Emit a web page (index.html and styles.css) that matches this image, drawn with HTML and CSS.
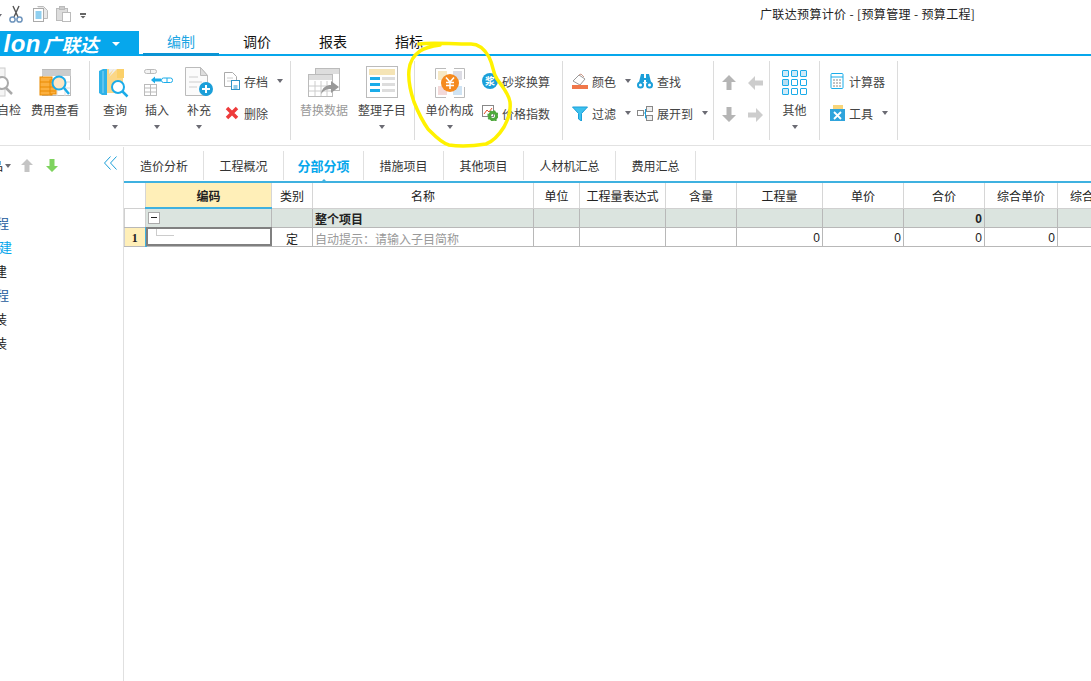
FILE: index.html
```html
<!DOCTYPE html>
<html lang="zh-CN">
<head>
<meta charset="utf-8">
<title>广联达预算计价</title>
<link rel="stylesheet" href="styles.css">
</head>
<body>
<div class="app">
  <header class="quick">
    <i class="caret q-first"></i>
    <svg class="q-ic scissors" width="14" height="18" viewBox="0 0 14 18"><path d="M4 1l5 11M10 1L5 12" stroke="#555" stroke-width="1.4" fill="none"/><circle cx="3.5" cy="14.5" r="2.6" fill="none" stroke="#6f95bd" stroke-width="1.5"/><circle cx="10.5" cy="14.5" r="2.6" fill="none" stroke="#6f95bd" stroke-width="1.5"/></svg>
    <svg class="q-ic copy" width="16" height="16" viewBox="0 0 16 16"><path d="M4.500 .5h6l4 4v8h-4" fill="#e8e8e8" stroke="#bbb"/><rect x=".5" y="2.500" width="10" height="13" fill="#fff" stroke="#aaa"/><path d="M2.500 6h6M2.500 8h6M2.500 10h6M2.500 12h6" stroke="#1f9fe0"/></svg>
    <svg class="q-ic paste" width="16" height="16" viewBox="0 0 16 16"><rect x=".5" y="2.500" width="11" height="12" fill="#ddd" stroke="#bbb"/><rect x="3.500" y=".5" width="5" height="3" fill="#ccc" stroke="#bbb"/><rect x="6.500" y="6.500" width="8" height="9" fill="#fff" stroke="#bbb"/></svg>
    <span class="q-more"></span>
    <h1 class="win-title">广联达预算计价 - [预算管理 - 预算工程]</h1>
  </header>

  <nav class="menu">
    <div class="logo"><b class="logo-en">lon</b><b class="logo-cn">广联达</b><i class="caret white"></i></div>
    <a class="menu-tab on">编制</a>
    <a class="menu-tab">调价</a>
    <a class="menu-tab">报表</a>
    <a class="menu-tab">指标</a>
  </nav>

  <section class="ribbon">
    <div class="grp g1">
      <div class="big w-check">
        <svg class="ic" width="32" height="32" viewBox="0 0 32 32"><rect x="-8" y="2" width="20" height="28" fill="#f5f5f5" stroke="#ccc"/><circle cx="9" cy="17" r="6" fill="#fff" stroke="#aaa" stroke-width="2"/><path d="M13 22l6 6" stroke="#aaa" stroke-width="2.500"/></svg>
        <span>自检</span>
      </div>
      <div class="big w-fee">
        <svg class="ic" width="32" height="32" viewBox="0 0 32 32"><rect x="3.500" y="3.500" width="28" height="26" fill="#fff" stroke="#bbb"/><path d="M3 7h29" stroke="#ccc" stroke-width="6"/><path d="M10 12v18M18 12v18M26 12v18M4 16h27M4 22h27" stroke="#ddd"/><rect x="1" y="11" width="12" height="18" fill="#fbb040" stroke="#e98a00"/><rect x="11" y="14" width="6" height="14" fill="#fbb040" stroke="#e98a00"/><path d="M1 16h15M1 21h15M1 25h15" stroke="#e98a00"/><circle cx="20" cy="17" r="6.500" fill="#fde6c3" stroke="#1bace9" stroke-width="2"/><path d="M25 22l5 6" stroke="#1bace9" stroke-width="2.500"/></svg>
        <span>费用查看</span>
      </div>
    </div>

    <div class="grp g2">
      <div class="big w-query">
        <svg class="ic" width="32" height="32" viewBox="0 0 32 32"><path d="M0 5l4-2h4v26H3l-3-2z" fill="#2fb2e8"/><path d="M8 3l12 0 4 0v24H8z" fill="#fbd787"/><path d="M10 3l5 0-5 5zM15 3h3l-8 8" fill="#eee"/><path d="M4 5v22" stroke="#8fd6f4"/><path d="M18 3h7v9h-7z" fill="#fbd069"/><circle cx="19" cy="21" r="6" fill="#fff" stroke="#1bace9" stroke-width="2"/><path d="M23.500 25.500l5 5" stroke="#1bace9" stroke-width="2.500"/></svg>
        <span>查询</span><i class="caret"></i>
      </div>
      <div class="big w-insert">
        <svg class="ic" width="32" height="32" viewBox="0 0 32 32"><rect x="3.500" y="3.500" width="12" height="4" rx="2" fill="#f3f3f3" stroke="#bbb"/><path d="M9.500 3.500v4" stroke="#bbb"/><path d="M14 14h6" stroke="#1bace9" stroke-width="3"/><path d="M14 10.500v7l-4-3.500z" fill="#1bace9"/><rect x="20.500" y="12" width="11" height="4.500" rx="2" fill="#fff" stroke="#1bace9"/><path d="M26 12v4.500" stroke="#1bace9"/><rect x="3.500" y="18.500" width="12" height="11" fill="#fff" stroke="#bbb"/><path d="M3.500 22h12M3.500 26h12M9.500 18.500v11" stroke="#bbb"/></svg>
        <span>插入</span><i class="caret"></i>
      </div>
      <div class="big w-add">
        <svg class="ic" width="32" height="32" viewBox="0 0 32 32"><path d="M2.500 1.500h15l7 8v20h-22z" fill="#fbfbfb" stroke="#bbb"/><path d="M17.500 1.500v8h7z" fill="#ddd" stroke="#bbb"/><path d="M6 11h9M6 16h13M6 21h8" stroke="#ddd" stroke-width="1.500"/><circle cx="23" cy="23" r="7" fill="#1b9fd9"/><path d="M23 19v8M19 23h8" stroke="#fff" stroke-width="2"/></svg>
        <span>补充</span><i class="caret"></i>
      </div>
      <div class="small-col c-archive">
        <div class="small">
          <svg class="sic" width="16" height="18" viewBox="0 0 16 18"><path d="M.5.5h8l4 4v10H.5z" fill="#fff" stroke="#aaa"/><path d="M3 6h6M3 9h6" stroke="#ccc"/><rect x="7.500" y="8.500" width="8" height="9" fill="#fff" stroke="#2e93c7"/><rect x="9.500" y="13" width="4" height="4" fill="#8fcbe9"/></svg>
          <span>存档</span><i class="caret"></i>
        </div>
        <div class="small">
          <svg class="sic" width="16" height="14" viewBox="0 0 16 14"><path d="M3 2l10 10M13 2L3 12" stroke="#ee3b3b" stroke-width="3.500"/></svg>
          <span>删除</span>
        </div>
      </div>
    </div>

    <div class="grp g3">
      <div class="big w-replace dim">
        <svg class="ic" width="32" height="32" viewBox="0 0 32 32"><rect x="7.500" y="2.500" width="24" height="22" fill="#fff" stroke="#bbb"/><path d="M8 5.500h23" stroke="#ddd" stroke-width="5"/><rect x=".5" y="8.500" width="24" height="22" fill="#fff" stroke="#bbb"/><path d="M1 11.500h23" stroke="#ddd" stroke-width="5"/><path d="M1 20h23M1 25h23M7 15v15M13 15v15M19 15v15" stroke="#ccc"/><path d="M13 28c1-7 6-9 10-9v-4l8 6-8 6v-4c-4 0-7 1-10 5z" fill="#999"/></svg>
        <span>替换数据</span>
      </div>
      <div class="big w-tidy">
        <svg class="ic" width="32" height="32" viewBox="0 0 32 32"><rect x=".5" y=".5" width="31" height="31" fill="#fff" stroke="#bbb"/><rect x="3" y="3" width="26" height="6" fill="#f5e4b5"/><rect x="3" y="11" width="11" height="18" fill="#fff"/><path d="M4 12.500h10M4 18.500h10M4 24.500h10" stroke="#1bace9" stroke-width="3"/><path d="M16 12.500h13M16 18.500h13M16 24.500h13" stroke="#ddd" stroke-width="3"/></svg>
        <span>整理子目</span><i class="caret"></i>
      </div>
    </div>

    <div class="grp g4">
      <div class="big w-price">
        <svg class="ic price-ic" width="30" height="30" viewBox="0 0 30 30"><path d="M.5 11V.5H11M19 .5h10.500V11M29.500 19v10.500H19M11 29.500H.5V19" fill="none" stroke="#bbb"/><rect x="3" y="3" width="9" height="9" fill="#f6e8c3"/><rect x="18" y="3" width="9" height="9" fill="#dcdce4"/><rect x="3" y="18" width="9" height="9" fill="#f3d9d9"/><rect x="18" y="18" width="9" height="9" fill="#cfe3f3"/><circle cx="15" cy="15" r="9" fill="#f58a1f"/><path d="M11 9.500l4 4.500 4-4.500M15 14v7M11 14.500h8M11 17.500h8" fill="none" stroke="#fff" stroke-width="1.500"/></svg>
        <span>单价构成</span><i class="caret"></i>
      </div>
      <div class="small-col c-mortar">
        <div class="small">
          <svg class="sic" width="16" height="16" viewBox="0 0 16 16"><circle cx="8" cy="8" r="8" fill="#1b9fd9"/><text x="8" y="12" class="badge">浆</text></svg>
          <span>砂浆换算</span>
        </div>
        <div class="small">
          <svg class="sic" width="16" height="16" viewBox="0 0 16 16"><rect x=".5" y=".5" width="11" height="11" fill="#fff" stroke="#888"/><path d="M2 9l3-4 2 2 3-4" fill="none" stroke="#e2502c"/><circle cx="11" cy="11" r="3.500" fill="none" stroke="#4ea83c" stroke-width="3"/><circle cx="11" cy="11" r="5" fill="none" stroke="#4ea83c" stroke-width="1.500" stroke-dasharray="2 1.900"/></svg>
          <span>价格指数</span>
        </div>
      </div>
    </div>

    <div class="grp g5">
      <div class="small-col c-color">
        <div class="small">
          <svg class="sic" width="16" height="16" viewBox="0 0 16 16"><path d="M1 8l6-6 6 4-5 6z" fill="#fff" stroke="#999"/><path d="M7 2l2-1 3 3" fill="none" stroke="#c98"/><rect x="0" y="12" width="16" height="4" fill="#f0774a"/></svg>
          <span>颜色</span><i class="caret"></i>
        </div>
        <div class="small">
          <svg class="sic" width="16" height="15" viewBox="0 0 16 15"><path d="M.5 1h15l-6 6.500V15l-3-2V7.500z" fill="#3cc1ee" stroke="#1b9fd9"/></svg>
          <span>过滤</span><i class="caret"></i>
        </div>
      </div>
      <div class="small-col c-find">
        <div class="small">
          <svg class="sic" width="16" height="15" viewBox="0 0 16 15"><path d="M4 0h3v4h2V0h3l2 8h-5V6H7v2H2z" fill="#1b9fd9"/><circle cx="3.500" cy="11" r="3.500" fill="#1b9fd9"/><circle cx="12.500" cy="11" r="3.500" fill="#1b9fd9"/><circle cx="3.500" cy="11" r="1.500" fill="#fff"/><circle cx="12.500" cy="11" r="1.500" fill="#fff"/></svg>
          <span>查找</span>
        </div>
        <div class="small">
          <svg class="sic" width="16" height="15" viewBox="0 0 16 15"><rect x=".5" y="4.500" width="6" height="5" fill="#fff" stroke="#888"/><rect x="9.500" y=".5" width="6" height="5" fill="#eee" stroke="#888"/><rect x="9.500" y="9.500" width="6" height="5" fill="#eee" stroke="#888"/><path d="M7 7h1.500M8.500 3v9h1" fill="none" stroke="#1b9fd9"/></svg>
          <span>展开到</span><i class="caret"></i>
        </div>
      </div>
    </div>

    <div class="grp g6">
      <svg class="arrow" width="14" height="15" viewBox="0 0 14 15"><path d="M7 0l7 7H9.500v8h-5V7H0z" fill="#b5b5b5"/></svg>
      <svg class="arrow" width="15" height="14" viewBox="0 0 15 14"><path d="M0 7l7-7v4.500h8v5H7V14z" fill="#cdcdcd"/></svg>
      <svg class="arrow" width="14" height="15" viewBox="0 0 14 15"><path d="M7 15L0 8h4.500V0h5v8H14z" fill="#b5b5b5"/></svg>
      <svg class="arrow" width="15" height="14" viewBox="0 0 15 14"><path d="M15 7L8 0v4.500H0v5h8V14z" fill="#cdcdcd"/></svg>
    </div>

    <div class="grp g7">
      <div class="big w-other">
        <div class="dots"><i class="f"></i><i class="f"></i><i class="f"></i><i class="s"></i><i></i><i></i><i class="f"></i><i></i><i></i></div>
        <span>其他</span><i class="caret"></i>
      </div>
    </div>

    <div class="grp g8">
      <div class="small-col c-tools">
        <div class="small">
          <svg class="sic" width="15" height="16" viewBox="0 0 15 16"><rect x="1" y=".5" width="12" height="15" rx="1" fill="#fff" stroke="#1bace9"/><path d="M1 4h12" stroke="#1bace9"/><path d="M3 7h2M6 7h2M9 7h2M3 10h2M6 10h2M9 10h2M3 13h2M6 13h2M9 13h2" stroke="#888"/></svg>
          <span>计算器</span>
        </div>
        <div class="small">
          <svg class="sic" width="15" height="16" viewBox="0 0 15 16"><rect x="3" y="0" width="10" height="7" fill="#f7d57a"/><rect x="0" y="4" width="15" height="12" fill="#2fa4dc"/><path d="M4 7l7 7M11 7l-7 7" stroke="#fff" stroke-width="1.800"/></svg>
          <span>工具</span><i class="caret"></i>
        </div>
      </div>
    </div>
  </section>

  <main class="main">
    <aside class="side">
      <div class="side-bar">
        <span class="side-clip">品</span><i class="caret"></i>
        <svg class="side-up" width="12" height="13" viewBox="0 0 12 13"><path d="M6 0l6 6H8.500v7h-5V6H0z" fill="#c4c4c4"/></svg>
        <svg class="side-down" width="12" height="13" viewBox="0 0 12 13"><path d="M6 13L0 7h3.500V0h5v7H12z" fill="#7ed35e"/></svg>
        <svg class="side-fold" width="13" height="14" viewBox="0 0 13 14"><path d="M6.500.5L.5 7l6 6.500M12.500.5l-6 6.500 6 6.500" fill="none" stroke="#1b9fd9"/></svg>
      </div>
      <ul class="tree">
        <li class="node-a">程</li>
        <li class="node-b">建</li>
        <li>建</li>
        <li class="node-a">程</li>
        <li>装</li>
        <li>装</li>
      </ul>
    </aside>

    <div class="content">
      <div class="subtabs">
        <a class="sub s78">造价分析</a>
        <a class="sub s80">工程概况</a>
        <a class="sub s80 on">分部分项</a>
        <a class="sub s80">措施项目</a>
        <a class="sub s80">其他项目</a>
        <a class="sub s92">人材机汇总</a>
        <a class="sub s80">费用汇总</a>
      </div>
      <div class="grid-wrap">
        <table class="grid">
          <colgroup>
            <col class="c0"><col class="c1"><col class="c2"><col class="c3"><col class="c4"><col class="c5"><col class="c6"><col class="c7"><col class="c8"><col class="c9"><col class="c10"><col class="c11">
          </colgroup>
          <thead>
            <tr>
              <th></th><th class="sel">编码</th><th>类别</th><th>名称</th><th>单位</th><th>工程量表达式</th><th>含量</th><th>工程量</th><th>单价</th><th>合价</th><th>综合单价</th><th>综合合价</th>
            </tr>
          </thead>
          <tbody>
            <tr class="total">
              <td class="rh"></td><td class="code"><span class="minus"></span></td><td></td><td class="left strong">整个项目</td><td></td><td></td><td></td><td></td><td></td><td class="num strong">0</td><td></td><td></td>
            </tr>
            <tr class="row">
              <td class="rh cur">1</td><td class="active"><span class="tree-line"></span></td><td class="mid">定</td><td class="left hint">自动提示：请输入子目简称</td><td></td><td></td><td></td><td class="num">0</td><td class="num">0</td><td class="num">0</td><td class="num">0</td><td></td>
            </tr>
          </tbody>
        </table>
      </div>
    </div>
  </main>

  <svg class="ink" width="1091" height="681" viewBox="0 0 1091 681"><path d="M419 44c12-2 30 0 52 0 8 0 14 6 18 13 5 10 3 14 8 22 5 7 12 15 13 23 1 11-2 17-6 25-5 8-10 14-18 17-12 2-25 3-37 1-8-2-15-10-21-16-5-7-10-17-14-27-3-9-6-22-5-32 1-9 4-14 11-19 6-4 13-5 20-6" fill="none" stroke="#fff200" stroke-width="3.500" stroke-linecap="round"/></svg>
</div>
</body>
</html>
```
FILE: styles.css
```css
* { box-sizing: border-box; }
html, body { margin: 0; padding: 0; height: 100%; overflow: hidden; background: #fff; }
body { font-family: "Noto Sans CJK SC", "Liberation Sans", sans-serif; font-size: 12px; color: #333; }
.app { position: relative; width: 1091px; height: 681px; overflow: hidden; display: flex; flex-direction: column; }

.caret { display: block; width: 0; height: 0; border-left: 3.500px solid transparent; border-right: 3.500px solid transparent; border-top: 4px solid #6b6b73; }
.caret.white { border-top-color: #fff; border-left-width: 4px; border-right-width: 4px; border-top-width: 4px; }

/* quick access */
.quick { height: 31px; flex: none; display: flex; align-items: center; }
.q-first { margin-left: -4px; }
.q-ic { flex: none; display: block; }
.scissors { margin-left: 7px; margin-top: -3px; }
.copy { margin-left: 10px; margin-top: -4px; }
.paste { margin-left: 7px; margin-top: -4px; }
.q-more { margin-left: 8px; width: 6px; height: 6px; background: linear-gradient(#666 0 2px, transparent 2px 3px, #666 3px); clip-path: polygon(0 0, 100% 0, 100% 50%, 50% 100%, 0 50%); }
.win-title { margin: -3px 0 0 674px; font-size: 12px; font-weight: 400; color: #222; white-space: nowrap; line-height: 16px; letter-spacing: .35px; }

/* menu tabs */
.menu { height: 25px; flex: none; display: flex; border-bottom: 2px solid #06a7ec; }
.logo { width: 139px; flex: none; margin-bottom: -2px; background: #06a7ec; color: #fff; display: flex; align-items: center; position: relative; white-space: nowrap; overflow: hidden; }
.logo-en { font-family: "Liberation Sans", sans-serif; font-style: italic; font-weight: 700; font-size: 24px; width: 41px; flex: none; text-align: right; line-height: 24px; letter-spacing: .5px; overflow: hidden; direction: rtl; }
.logo-cn { font-size: 18.500px; font-style: italic; font-weight: 700; margin-left: 2px; line-height: 24px; }
.logo .caret { margin-left: 13px; }
.menu-tab { width: 76px; flex: none; text-align: center; font-size: 14px; line-height: 21px; color: #111; }
.menu-tab:first-of-type { margin-left: 4px; }
.menu-tab.on { color: #1ba5e3; border-bottom: 3px solid #0a94d4; height: 25px; margin-bottom: -2px; }

/* ribbon */
.ribbon { height: 90px; flex: none; display: flex; border-bottom: 1px solid #e2e2e2; padding-top: 5px; padding-bottom: 5px; }
.grp { flex: none; display: flex; border-right: 1px solid #dcdcdc; position: relative; }
.g1 { width: 90px; }
.g2 { width: 201px; padding-left: 4px; }
.g3 { width: 124px; padding-left: 4px; }
.g4 { width: 148px; padding-left: 10px; }
.g5 { width: 151px; padding-left: 9px; }
.g6 { width: 56px; display: grid; grid-template-columns: 26px 26px; justify-items: center; align-items: center; padding: 14px 0 18px 2px; row-gap: 0; align-content: space-between; }
.g7 { width: 50px; justify-content: center; }
.g8 { width: 78px; padding-left: 10px; }

.big { display: flex; flex-direction: column; align-items: center; padding-top: 4px; flex: none; color: #444; }
.big > span { line-height: 16px; margin-top: 3px; white-space: nowrap; }
.big .ic { display: block; flex: none; height: 34px; }
.big .price-ic { width: 30px; height: 30px; margin: 3px 0 1px 1px; }
.big .caret { margin-top: 7px; }
.w-check { width: 46px; margin-left: -14px; }
.w-fee { width: 64px; margin-left: -9px; }
.w-query { width: 42px; }
.w-insert { width: 42px; }
.w-add { width: 42px; }
.w-replace { width: 58px; }
.w-replace .ic, .w-fee .ic { width: 32px; }
.w-tidy { width: 58px; }
.w-price { width: 49px; }
.dim { color: #999; }
.badge { font: 700 10px "Noto Sans CJK SC", sans-serif; fill: #fff; text-anchor: middle; }

.small-col { display: flex; flex-direction: column; justify-content: space-between; padding: 11px 0 18px; flex: none; color: #444; }
.small { display: flex; align-items: center; height: 18px; position: relative; white-space: nowrap; }
.small .sic { flex: none; display: block; margin-right: 4px; }
.small .caret { margin-left: 9px; }
.c-archive { margin-left: 4px; }
.c-mortar { margin-left: 8px; }
.c-find { margin-left: 6px; }

.arrow { display: block; }

.dots { display: grid; grid-template-columns: repeat(3, 7px); grid-auto-rows: 7px; gap: 2px; margin: 5px 0 4px; }
.dots i { display: block; border: 1px solid #1bace9; background: #fff; border-radius: 1px; }
.dots i.f { background: #cfeaf8; }
.dots i.s { background: #b7dff3; }

/* main */
.main { flex: 1; display: flex; min-height: 0; }
.side { width: 124px; flex: none; border-right: 1px solid #e0e0e0; margin-top: 1px; position: relative; overflow: hidden; }
.side-bar { height: 36px; display: flex; align-items: center; padding-top: 1px; }
.side-clip { width: 3px; overflow: hidden; direction: rtl; color: #222; flex: none; }
.side-bar .caret { margin-left: 2px; }
.side-up { margin-left: 10px; }
.side-down { margin-left: 13px; }
.side-fold { margin-left: 46px; margin-top: -6px; }
.tree { list-style: none; margin: 28px 0 0; padding: 0; }
.tree li { height: 24px; line-height: 24px; font-size: 13px; margin-left: -6px; color: #222; }
.tree .node-a { color: #1c5a9c; margin-left: -4px; }
.tree .node-b { color: #06a7ec; margin-left: -1px; }

.content { flex: 1; min-width: 0; display: flex; flex-direction: column; padding-top: 3px; }
.subtabs { height: 34px; flex: none; display: flex; border-bottom: 2px solid #3fb1e0; padding-left: 1px; }
.sub { flex: none; text-align: center; height: 29px; margin-top: 2px; border-right: 1px solid #e0e0e0; color: #333; position: relative; line-height: 30px; }
.s78 { width: 79px; }
.s80 { width: 80px; }
.s92 { width: 92px; }
.sub.on { color: #06a7ec; font-weight: 700; font-size: 13px; }
.sub.on::after { content: ""; position: absolute; left: 50%; bottom: -3px; margin-left: -4px; border-left: 4px solid transparent; border-right: 4px solid transparent; border-bottom: 4px solid #3fb1e0; }

.grid-wrap { flex: 1; overflow: hidden; }
.grid { border-collapse: collapse; table-layout: fixed; width: 1006px; color: #222; }
.c0 { width: 21px; } .c1 { width: 126px; } .c2 { width: 41px; } .c3 { width: 221px; } .c4 { width: 46px; } .c5 { width: 86px; } .c6 { width: 71px; } .c7 { width: 86px; } .c8 { width: 81px; } .c9 { width: 81px; } .c10 { width: 73px; } .c11 { width: 73px; }
.grid th, .grid td { padding: 0 2px; overflow: hidden; white-space: nowrap; }
.grid th { height: 25px; font-weight: 400; text-align: center; border-right: 1px solid #d6d6d6; border-bottom: 1px solid #d0d0d0; background: #fff; }
.grid th.sel { background: #ffefb8; font-weight: 700; border-bottom: 2px solid #3fb1e0; }
.grid td { height: 19px; line-height: 16px; padding-top: 2px; border-right: 1px solid #b8b8b8; border-bottom: 1px solid #b8b8b8; font-size: 12px; position: relative; }
.grid .row td { line-height: 15px; padding-top: 3px; }
.total td { background: #dbe4df; }
.total td.rh { background: #fff; border-left: 1px solid #d0d0d0; border-right-color: #d0d0d0; }
.rh { text-align: center; font: 700 12px "Liberation Serif", serif; border-left: 1px solid #d0d0d0; }
.rh.cur { background: #ffefb8; border-right: 2px solid #3fb1e0; }
.left { text-align: left; }
.mid { text-align: center; }
.num { text-align: right; font-family: "Liberation Sans", sans-serif; }
.strong { font-weight: 700; }
.hint { color: #999; }
.grid td.code { padding-top: 0; vertical-align: middle; }
.minus { display: block; width: 12px; height: 12px; border: 1px solid #aaa; background: #fff; position: relative; }
.minus::after { content: ""; position: absolute; left: 2px; right: 2px; top: 4px; height: 1px; background: #222; }
.grid .row td.active { outline: 2px solid #808080; outline-offset: -2px; padding-top: 0; vertical-align: top; }
.tree-line { display: block; width: 18px; height: 8px; margin: 0 0 0 7px; border-left: 1px solid #ccc; border-bottom: 1px solid #ccc; }

.ink { position: absolute; left: 0; top: 0; pointer-events: none; }
```
